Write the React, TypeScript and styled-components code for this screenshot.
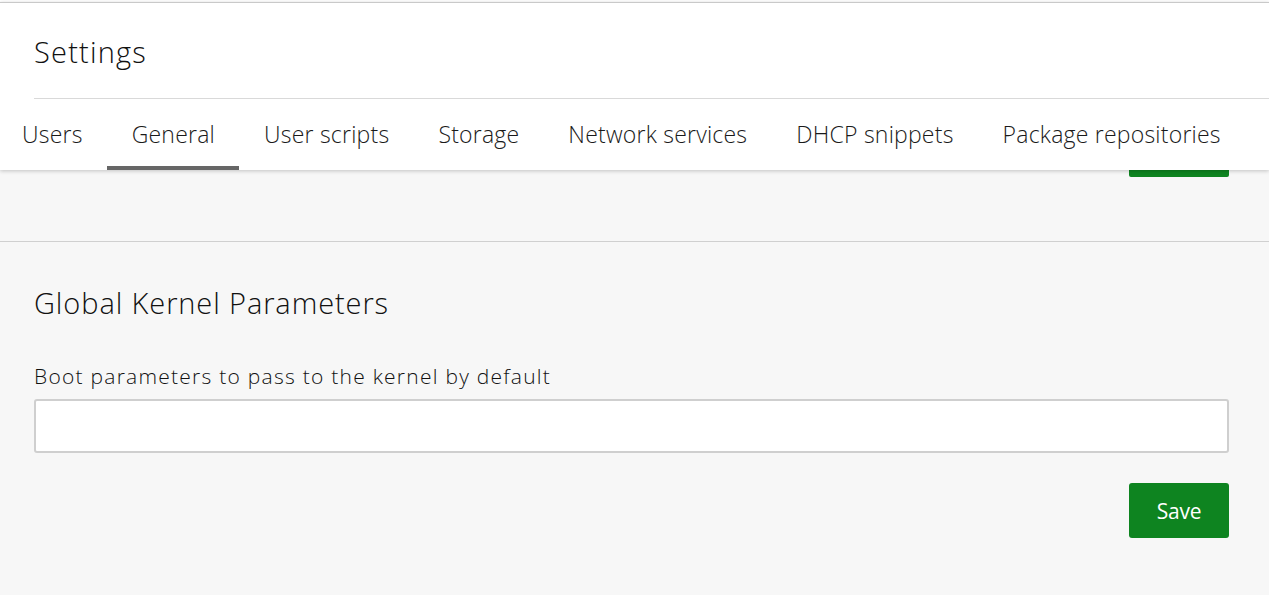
import React from 'react'
import styled, { createGlobalStyle } from 'styled-components'

const tabs = [
  'Users',
  'General',
  'User scripts',
  'Storage',
  'Network services',
  'DHCP snippets',
  'Package repositories',
]

const App = () => (
  <Page>
    <GlobalStyle />
    <Header>
      <Title>Settings</Title>
      <TabList>
        {tabs.map(tab => (
          <Tab key={tab} active={tab === 'General'}>
            {tab}
          </Tab>
        ))}
      </TabList>
    </Header>
    <PrevSection>
      <PeekButton />
    </PrevSection>
    <Section>
      <SectionTitle>Global Kernel Parameters</SectionTitle>
      <Label htmlFor="kernel-opts">
        Boot parameters to pass to the kernel by default
      </Label>
      <Input id="kernel-opts" type="text" />
      <Actions>
        <SaveButton type="button">Save</SaveButton>
      </Actions>
    </Section>
  </Page>
)

export default App

const GlobalStyle = createGlobalStyle`
  html, body {
    margin: 0;
    padding: 0;
    background: #f7f7f7;
    overflow: hidden;
  }

  body {
    font-family: 'Open Sans', 'Liberation Sans', sans-serif;
    font-weight: 300;
    color: #111;
  }
`

const Page = styled.div`
  height: 595px;
  background: #f7f7f7;
  padding-top: 2px;
  box-sizing: border-box;
  background-image: linear-gradient(#fff, #fff);
  background-size: 100% 2px;
  background-repeat: no-repeat;
`

const Header = styled.header`
  position: relative;
  z-index: 1;
  background: #fff;
  border-top: 1px solid #c9c9c9;
  box-shadow: 0 1px 4px rgba(0, 0, 0, 0.22);
`

const Title = styled.h1`
  margin: 0 0 0 34px;
  height: 96px;
  box-sizing: border-box;
  padding-top: 31px;
  font-size: 29px;
  font-weight: 300;
  line-height: 36px;
  letter-spacing: 1.2px;
  border-bottom: 1px solid #d9d9d9;
`

const TabList = styled.nav`
  display: flex;
  margin-left: -3px;
  height: 71px;
`

const Tab = styled.a<{ active?: boolean }>`
  display: flex;
  align-items: center;
  padding: 3px 24px 0 25px;
  font-size: 23px;
  line-height: 1;
  letter-spacing: 0.22px;
  white-space: nowrap;
  color: #1a1a1a;
  border-bottom: 4px solid ${p => (p.active ? '#666' : 'transparent')};
  box-sizing: border-box;
`

const PrevSection = styled.div`
  height: 71px;
  border-bottom: 1px solid #d0d0d0;
  display: flex;
  justify-content: flex-end;
  padding-right: 40px;
`

const PeekButton = styled.div`
  width: 100px;
  height: 7px;
  background: #0e8420;
  border-radius: 0 0 2px 2px;
`

const Section = styled.section`
  padding: 43px 40px 0 34px;
`

const SectionTitle = styled.h2`
  margin: 0;
  font-size: 29px;
  font-weight: 300;
  line-height: 36px;
  letter-spacing: 0.9px;
`

const Label = styled.label`
  display: block;
  margin-top: 40px;
  font-size: 21px;
  line-height: 30px;
  letter-spacing: 1.25px;
`

const Input = styled.input`
  display: block;
  width: 100%;
  height: 54px;
  margin-top: 8px;
  box-sizing: border-box;
  background: #fff;
  border: 2px solid #cfcfcf;
  border-radius: 3px;
  font: inherit;
  outline: none;
`

const Actions = styled.div`
  display: flex;
  justify-content: flex-end;
  margin-top: 30px;
`

const SaveButton = styled.button`
  width: 100px;
  height: 55px;
  background: #0e8420;
  color: #fff;
  border: none;
  border-radius: 3px;
  font-family: 'Open Sans', 'Liberation Sans', sans-serif;
  font-weight: 400;
  font-size: 21px;
  letter-spacing: -0.3px;
`
